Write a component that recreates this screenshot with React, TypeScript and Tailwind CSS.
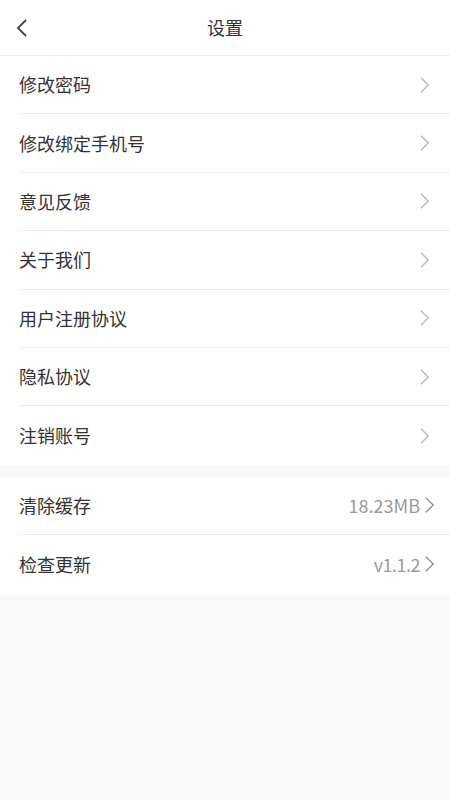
const group1 = ['修改密码', '修改绑定手机号', '意见反馈', '关于我们', '用户注册协议', '隐私协议', '注销账号']

function Chevron({ className }: { className: string }) {
  return (
    <svg viewBox="0 0 12 20" className={className} fill="none" stroke="currentColor" strokeWidth="1.4">
      <path d="M2 2l8 8-8 8" />
    </svg>
  )
}

export default function App() {
  return (
    <div className="w-[450px] min-h-[800px] bg-[#f8f8f8] text-[#333]" style={{ fontFamily: '"Noto Sans CJK SC", "Noto Sans", sans-serif' }}>
      {/* Header */}
      <div className="h-[56px] bg-white border-b border-[#eeeeee] flex items-center relative">
        <svg viewBox="0 0 12 20" className="w-[12px] h-[20px] ml-[16px] text-[#444]" fill="none" stroke="currentColor" strokeWidth="1.8">
          <path d="M10 2l-8 8 8 8" />
        </svg>
        <div className="absolute inset-0 flex items-center justify-center text-[18px] text-[#333]">设置</div>
      </div>

      {/* Group 1 */}
      <div className="bg-white pl-[19px]">
        {group1.map((t, i) => (
          <div key={t} className={`h-[58.4px] flex items-center pr-[20px] ${i < group1.length - 1 ? 'border-b border-[#eeeeee]' : ''}`}>
            <span className="flex-1 text-[18px]">{t}</span>
            <Chevron className="w-[11px] h-[20px] text-[#b5b5b5]" />
          </div>
        ))}
      </div>

      {/* Group 2 */}
      <div className="bg-white pl-[19px] mt-[12px]">
        <div className="h-[58.5px] flex items-center pr-[15px] border-b border-[#eeeeee]">
          <span className="flex-1 text-[18px]">清除缓存</span>
          <span className="text-[18px] text-[#999] mr-[4px]">18.23MB</span>
          <Chevron className="w-[11px] h-[20px] text-[#888]" />
        </div>
        <div className="h-[58.5px] flex items-center pr-[15px]">
          <span className="flex-1 text-[18px]">检查更新</span>
          <span className="text-[18px] text-[#999] mr-[4px] tracking-[-0.5px]">v1.1.2</span>
          <Chevron className="w-[11px] h-[20px] text-[#888]" />
        </div>
      </div>
    </div>
  )
}
